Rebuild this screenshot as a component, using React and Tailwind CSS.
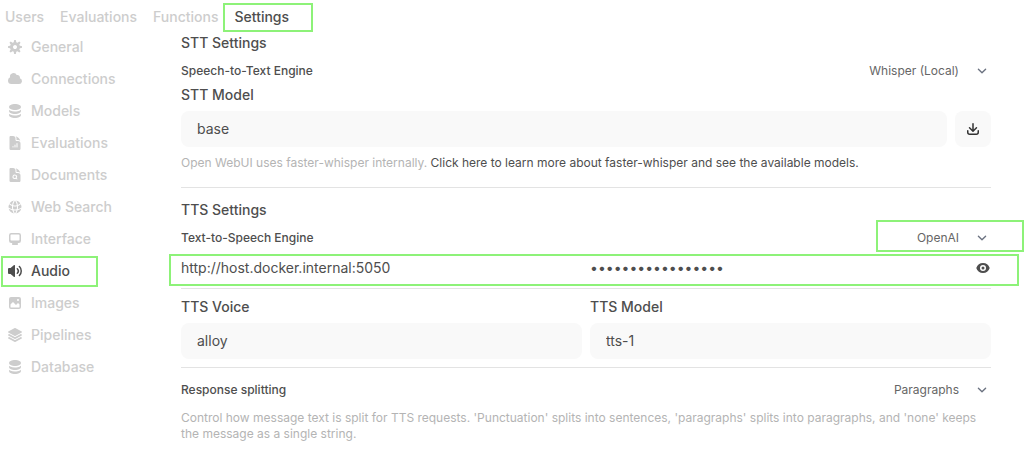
import { useState } from "react";
import {
  HiDocumentChartBar,
  HiDocumentMagnifyingGlass,
  HiGlobeAlt,
  HiSquare3Stack3D,
} from "react-icons/hi2";

function Micro({ paths, className = "size-4" }) {
  return (
    <svg viewBox="0 0 16 16" fill="currentColor" aria-hidden="true" className={className}>
      {paths.map((d) => (
        <path key={d} d={d} fillRule="evenodd" clipRule="evenodd" />
      ))}
    </svg>
  );
}

const COG = [
  "M6.955 1.45A.5.5 0 0 1 7.452 1h1.096a.5.5 0 0 1 .497.45l.17 1.699c.484.12.94.312 1.356.562l1.321-1.081a.5.5 0 0 1 .67.033l.774.775a.5.5 0 0 1 .034.67l-1.08 1.32c.25.417.44.873.561 1.357l1.699.17a.5.5 0 0 1 .45.497v1.096a.5.5 0 0 1-.45.497l-1.699.17c-.12.484-.312.94-.562 1.356l1.082 1.322a.5.5 0 0 1-.034.67l-.774.774a.5.5 0 0 1-.67.033l-1.322-1.08c-.416.25-.872.44-1.356.561l-.17 1.699a.5.5 0 0 1-.497.45H7.452a.5.5 0 0 1-.497-.45l-.17-1.699a4.973 4.973 0 0 1-1.356-.562L4.108 13.37a.5.5 0 0 1-.67-.033l-.774-.775a.5.5 0 0 1-.034-.67l1.08-1.32a4.971 4.971 0 0 1-.561-1.357l-1.699-.17A.5.5 0 0 1 1 8.548V7.452a.5.5 0 0 1 .45-.497l1.699-.17c.12-.484.312-.94.562-1.356L2.629 4.107a.5.5 0 0 1 .034-.67l.774-.774a.5.5 0 0 1 .67-.033L5.43 3.71a4.97 4.97 0 0 1 1.356-.561l.17-1.699ZM6 8c0 .538.212 1.026.558 1.385l.057.057a2 2 0 0 0 2.828-2.828l-.058-.056A2 2 0 0 0 6 8Z",
];
const CLOUD = [
  "M1 9.5A3.5 3.5 0 0 0 4.5 13H12a3 3 0 0 0 .917-5.857 2.503 2.503 0 0 0-3.198-3.019 3.5 3.5 0 0 0-6.628 2.171A3.5 3.5 0 0 0 1 9.5Z",
];
const STACK = [
  "M8 7c3.314 0 6-1.343 6-3s-2.686-3-6-3-6 1.343-6 3 2.686 3 6 3Z",
  "M8 8.5c1.84 0 3.579-.37 4.914-1.037A6.33 6.33 0 0 0 14 6.78V8c0 1.657-2.686 3-6 3S2 9.657 2 8V6.78c.346.273.72.5 1.087.683C4.42 8.131 6.16 8.5 8 8.5Z",
  "M8 12.5c1.84 0 3.579-.37 4.914-1.037.366-.183.74-.41 1.086-.684V12c0 1.657-2.686 3-6 3s-6-1.343-6-3v-1.22c.346.273.72.5 1.087.683C4.42 12.131 6.16 12.5 8 12.5Z",
];
const DESKTOP = [
  "M2 4.25A2.25 2.25 0 0 1 4.25 2h7.5A2.25 2.25 0 0 1 14 4.25v5.5A2.25 2.25 0 0 1 11.75 12h-1.312c.1.128.21.248.328.36a.75.75 0 0 1 .234.545v.345a.75.75 0 0 1-.75.75h-4.5a.75.75 0 0 1-.75-.75v-.345a.75.75 0 0 1 .234-.545c.118-.111.228-.232.328-.36H4.25A2.25 2.25 0 0 1 2 9.75v-5.5Zm2.25-.75a.75.75 0 0 0-.75.75v4.5c0 .414.336.75.75.75h7.5a.75.75 0 0 0 .75-.75v-4.5a.75.75 0 0 0-.75-.75h-7.5Z",
];
const SPEAKER = [
  "M7.557 2.066A.75.75 0 0 1 8 2.75v10.5a.75.75 0 0 1-1.248.56L3.59 11H2a1 1 0 0 1-1-1V6a1 1 0 0 1 1-1h1.59l3.162-2.81a.75.75 0 0 1 .805-.124ZM12.95 3.05a.75.75 0 1 0-1.06 1.06 5.5 5.5 0 0 1 0 7.78.75.75 0 1 0 1.06 1.06 7 7 0 0 0 0-9.9Z",
  "M10.828 5.172a.75.75 0 1 0-1.06 1.06 2.5 2.5 0 0 1 0 3.536.75.75 0 1 0 1.06 1.06 4 4 0 0 0 0-5.656Z",
];
const PHOTO = [
  "M2 4a2 2 0 0 1 2-2h8a2 2 0 0 1 2 2v8a2 2 0 0 1-2 2H4a2 2 0 0 1-2-2V4Zm10.5 5.707a.5.5 0 0 0-.146-.353l-1-1a.5.5 0 0 0-.708 0L9.354 9.646a.5.5 0 0 1-.708 0L6.354 7.354a.5.5 0 0 0-.708 0l-2 2a.5.5 0 0 0-.146.353V12a.5.5 0 0 0 .5.5h8a.5.5 0 0 0 .5-.5V9.707ZM12 5a1 1 0 1 1-2 0 1 1 0 0 1 2 0Z",
];
const DOWNLOAD = [
  "M8.75 2.75a.75.75 0 0 0-1.5 0v5.69L5.03 6.22a.75.75 0 0 0-1.06 1.06l3.5 3.5a.75.75 0 0 0 1.06 0l3.5-3.5a.75.75 0 0 0-1.06-1.06L8.75 8.44V2.75Z",
  "M3.5 9.75a.75.75 0 0 0-1.5 0v1.5A2.75 2.75 0 0 0 4.75 14h6.5A2.75 2.75 0 0 0 14 11.25v-1.5a.75.75 0 0 0-1.5 0v1.5c0 .69-.56 1.25-1.25 1.25h-6.5c-.69 0-1.25-.56-1.25-1.25v-1.5Z",
];
const EYE = [
  "M8 9.5a1.5 1.5 0 1 0 0-3 1.5 1.5 0 0 0 0 3Z",
  "M1.38 8.28a.87.87 0 0 1 0-.566 7.003 7.003 0 0 1 13.238.006.87.87 0 0 1 0 .566A7.003 7.003 0 0 1 1.379 8.28ZM11 8a3 3 0 1 1-6 0 3 3 0 0 1 6 0Z",
];

const TABS = ["Users", "Evaluations", "Functions", "Settings"];

const SECTIONS = [
  { name: "General", icon: <Micro paths={COG} /> },
  { name: "Connections", icon: <Micro paths={CLOUD} /> },
  { name: "Models", icon: <Micro paths={STACK} /> },
  { name: "Evaluations", icon: <HiDocumentChartBar className="size-4" /> },
  { name: "Documents", icon: <HiDocumentMagnifyingGlass className="size-4" /> },
  { name: "Web Search", icon: <HiGlobeAlt className="size-4" /> },
  { name: "Interface", icon: <Micro paths={DESKTOP} /> },
  { name: "Audio", icon: <Micro paths={SPEAKER} /> },
  { name: "Images", icon: <Micro paths={PHOTO} /> },
  { name: "Pipelines", icon: <HiSquare3Stack3D className="size-4" /> },
  { name: "Database", icon: <Micro paths={STACK} /> },
];

function Highlight({ className }) {
  return (
    <span
      aria-hidden="true"
      className={`pointer-events-none absolute border-2 border-[#8df278] ${className}`}
    />
  );
}

function SelectRow({ id, label, options, highlighted }) {
  return (
    <div className="flex h-5 items-center justify-between text-xs">
      <label htmlFor={id} className="font-medium">
        {label}
      </label>
      <div className="relative flex items-center">
        <select
          id={id}
          className="appearance-none bg-transparent pr-8 pl-2 text-right text-[#666] outline-none"
        >
          {options.map((o) => (
            <option key={o}>{o}</option>
          ))}
        </select>
        <svg
          viewBox="0 0 20 20"
          fill="none"
          stroke="#6b7280"
          strokeWidth="1.5"
          strokeLinecap="round"
          strokeLinejoin="round"
          aria-hidden="true"
          className="pointer-events-none absolute right-0 size-[18px]"
        >
          <path d="M6 8l4 4 4-4" />
        </svg>
        {highlighted && <Highlight className="-top-2.5 -right-[33px] h-8 w-[148px]" />}
      </div>
    </div>
  );
}

function Field({ id, label, value, children }) {
  return (
    <div className="min-w-0 flex-1">
      <label htmlFor={id} className="mb-1.5 block text-sm font-medium">
        {label}
      </label>
      <div className="flex gap-2">
        <input
          id={id}
          defaultValue={value}
          className="h-9 min-w-0 flex-1 rounded-lg bg-[#f9f9f9] px-4 pb-0.5 text-sm outline-none"
        />
        {children}
      </div>
    </div>
  );
}

export default function App() {
  const [visible, setVisible] = useState(false);
  return (
    <div className="min-h-screen bg-white pt-[7px] font-['Inter',sans-serif] text-[#4e4e4e]">
      <nav className="flex gap-4 pb-1.5 pl-[5px] text-sm font-medium">
        {TABS.map((t) => (
          <a
            key={t}
            href="#"
            className={t === "Settings" ? "relative text-[#4e4e4e]" : "text-[#cdcdcd]"}
          >
            {t}
            {t === "Settings" && (
              <Highlight className="-top-1 -right-6 -bottom-[5px] -left-[11px]" />
            )}
          </a>
        ))}
      </nav>

      <div className="flex pr-[33px]">
        <nav className="flex w-[181px] shrink-0 flex-col items-start gap-3 pt-1 pl-[7px] text-sm font-medium">
          {SECTIONS.map((s) => (
            <a
              key={s.name}
              href="#"
              className={`flex items-center gap-2 ${
                s.name === "Audio" ? "relative text-[#4e4e4e]" : "text-[#cdcdcd]"
              }`}
            >
              {s.icon}
              {s.name}
              {s.name === "Audio" && (
                <Highlight className="-top-[5px] -right-7 -bottom-1.5 -left-1.5" />
              )}
            </a>
          ))}
        </nav>

        <main className="min-w-0 flex-1">
          <section>
            <h2 className="mb-2 text-sm font-medium">STT Settings</h2>
            <SelectRow
              id="stt-engine"
              label="Speech-to-Text Engine"
              options={["Whisper (Local)", "OpenAI", "Web API"]}
            />
            <div className="mt-1 flex">
              <Field id="stt-model" label="STT Model" value="base">
                <button
                  type="button"
                  aria-label="Download model"
                  className="flex size-9 items-center justify-center rounded-lg bg-[#f9f9f9] text-[#333]"
                >
                  <Micro paths={DOWNLOAD} />
                </button>
              </Field>
            </div>
            <p className="mt-2 text-xs text-[#b4b4b4]">
              Open WebUI uses faster-whisper internally.{" "}
              <a href="#" className="text-[#4e4e4e]">
                Click here to learn more about faster-whisper and see the available models.
              </a>
            </p>
          </section>

          <hr className="mt-4 mb-3 border-[#e3e3e3]" />

          <section>
            <h2 className="mb-2 text-sm font-medium">TTS Settings</h2>
            <SelectRow
              id="tts-engine"
              label="Text-to-Speech Engine"
              options={["OpenAI", "Web API", "ElevenLabs"]}
              highlighted
            />
            <div className="relative mt-2.5 flex gap-2 text-sm">
              <input
                aria-label="API Base URL"
                defaultValue="http://host.docker.internal:5050"
                className="h-5 min-w-0 flex-1 bg-transparent outline-none"
              />
              <div className="flex min-w-0 flex-1 items-center">
                <input
                  aria-label="API Key"
                  type={visible ? "text" : "password"}
                  defaultValue="sk-local-key-0001"
                  className="h-5 min-w-0 flex-1 bg-transparent outline-none"
                />
                <button
                  type="button"
                  aria-label="Toggle key visibility"
                  onClick={() => setVisible(!visible)}
                >
                  <Micro paths={EYE} />
                </button>
              </div>
              <Highlight className="-top-1 -right-7 -bottom-2 -left-3" />
            </div>

            <hr className="mt-2.5 mb-2 border-[#e3e3e3]" />

            <div className="flex gap-2">
              <Field id="tts-voice" label="TTS Voice" value="alloy" />
              <Field id="tts-model" label="TTS Model" value="tts-1" />
            </div>
          </section>

          <hr className="mt-2 mb-3 border-[#e3e3e3]" />

          <SelectRow
            id="split"
            label="Response splitting"
            options={["Paragraphs", "Punctuation", "None"]}
          />
          <p className="mt-2.5 text-xs text-[#b4b4b4]">
            Control how message text is split for TTS requests. 'Punctuation' splits into sentences,
            'paragraphs' splits into paragraphs, and 'none' keeps the message as a single string.
          </p>
        </main>
      </div>
    </div>
  );
}
